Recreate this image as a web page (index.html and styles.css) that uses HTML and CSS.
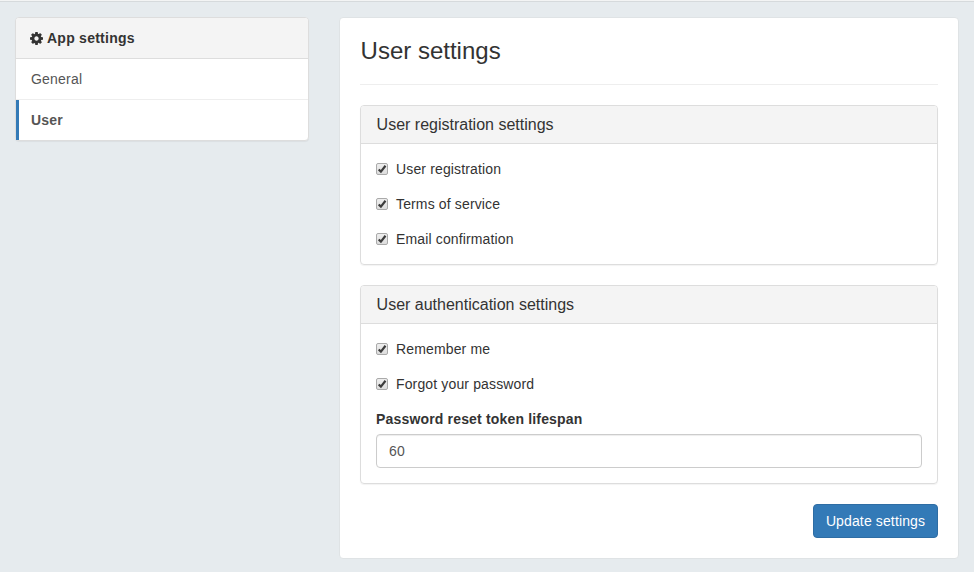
FILE: index.html
```html
<!DOCTYPE html>
<html lang="en">
<head>
<meta charset="utf-8">
<title>User settings</title>
<link rel="stylesheet" href="styles.css">
</head>
<body>
<div class="topbar"></div>
<div class="layout">
  <nav class="sidebar">
    <div class="sidebar-heading">
      <svg class="gear" viewBox="0 0 1536 1536" aria-hidden="true"><path fill-rule="evenodd" d="M1024 768q0-106-75-181t-181-75-181 75-75 181 75 181 181 75 181-75 75-181zm512-109v222q0 12-8 23t-20 13l-185 28q-19 54-39 91 35 50 107 138 10 12 10 25t-9 23q-27 37-99 108t-94 71q-12 0-26-9l-138-108q-44 23-91 38-16 136-29 186-7 28-36 28H657q-14 0-24.500-8.500T621 1506l-28-184q-49-16-90-37l-141 107q-10 9-25 9-14 0-25-11-126-114-165-168-7-10-7-23 0-12 8-23 15-21 51-66.500t54-70.500q-27-50-41-99L29 913q-13-2-21-12.500T0 877V655q0-12 8-23t19-13l186-28q14-46 39-92-40-57-107-138-10-12-10-24 0-10 9-23 26-36 98.500-107.500T337 135q13 0 26 10l138 107q44-23 91-38 16-136 29-186 7-28 36-28h222q14 0 24.500 8.500T915 30l28 184q49 16 90 37l142-107q9-9 24-9 13 0 25 10 129 119 165 170 7 8 7 22 0 12-8 23-15 21-51 66.500t-54 70.500q26 50 41 98l183 28q13 2 21 12.500t8 23.500z"/></svg>
      <span>App settings</span>
    </div>
    <a class="nav-item">General</a>
    <a class="nav-item active">User</a>
  </nav>
  <main class="content">
    <h1>User settings</h1>
    <section class="panel">
      <h2>User registration settings</h2>
      <div class="panel-body">
        <label class="check"><span class="box"><svg viewBox="0 0 12 12"><path d="M2.700 6.500L4.900 8.600L9.500 2.800"/></svg></span>User registration</label>
        <label class="check"><span class="box"><svg viewBox="0 0 12 12"><path d="M2.700 6.500L4.900 8.600L9.500 2.800"/></svg></span>Terms of service</label>
        <label class="check"><span class="box"><svg viewBox="0 0 12 12"><path d="M2.700 6.500L4.900 8.600L9.500 2.800"/></svg></span>Email confirmation</label>
      </div>
    </section>
    <section class="panel">
      <h2>User authentication settings</h2>
      <div class="panel-body">
        <label class="check"><span class="box"><svg viewBox="0 0 12 12"><path d="M2.700 6.500L4.900 8.600L9.500 2.800"/></svg></span>Remember me</label>
        <label class="check"><span class="box"><svg viewBox="0 0 12 12"><path d="M2.700 6.500L4.900 8.600L9.500 2.800"/></svg></span>Forgot your password</label>
        <label class="field-label" for="lifespan">Password reset token lifespan</label>
        <input class="field" id="lifespan" type="text" value="60">
      </div>
    </section>
    <div class="actions"><button type="button">Update settings</button></div>
  </main>
</div>
</body>
</html>
```
FILE: styles.css
```css
* { box-sizing: border-box; }
body {
  margin: 0;
  height: 572px;
  background: #e6ebee;
  color: #333;
  font: 14px/20px "Liberation Sans", Arial, sans-serif;
}
.topbar {
  height: 2px;
  background: #f3f4f4;
  border-bottom: 1px solid #d6dadc;
}
.layout {
  display: flex;
  align-items: flex-start;
  gap: 30px;
  padding: 15px 15px 0;
}
.sidebar {
  width: 294px;
  background: #fff;
  border: 1px solid #ddd;
  border-radius: 4px;
  box-shadow: 0 1px 1px rgba(0, 0, 0, .05);
}
.sidebar-heading {
  display: flex;
  align-items: center;
  gap: 4px;
  height: 41px;
  padding: 0 14px;
  background: #f4f4f4;
  border-bottom: 1px solid #ddd;
  border-radius: 3px 3px 0 0;
  font-weight: bold;
  letter-spacing: .25px;
}
.gear {
  width: 13px;
  height: 13px;
  fill: #333;
}
.nav-item {
  display: block;
  height: 41px;
  padding: 10px 15px;
  border-bottom: 1px solid #eee;
  color: #555;
  letter-spacing: .2px;
}
.nav-item.active {
  height: 40px;
  padding-left: 12px;
  border-bottom: 0;
  border-left: 3px solid #337ab7;
  font-weight: bold;
}
.content {
  width: 620px;
  height: 542px;
  padding: 20px;
  background: #fff;
  border: 1px solid #dfe3e5;
  border-radius: 4px;
}
h1 {
  height: 47px;
  margin: 0 0 20px;
  padding-left: .6px;
  border-bottom: 1px solid #eee;
  font-size: 24px;
  font-weight: normal;
  line-height: 26px;
}
.panel {
  margin-bottom: 20px;
  border: 1px solid #ddd;
  border-radius: 4px;
  box-shadow: 0 1px 1px rgba(0, 0, 0, .05);
}
h2 {
  height: 38px;
  margin: 0;
  padding: 10px 15.6px;
  background: #f4f4f4;
  border-bottom: 1px solid #ddd;
  border-radius: 3px 3px 0 0;
  font-size: 16px;
  font-weight: normal;
  line-height: 17px;
}
.panel-body { padding: 15px; }
.check {
  display: flex;
  align-items: center;
  gap: 8px;
  margin-bottom: 15px;
  letter-spacing: .14px;
}
.check:last-child { margin-bottom: 0; }
.box {
  width: 12px;
  height: 12px;
  border: 1px solid #aaa;
  border-radius: 2px;
  background: linear-gradient(#eee, #ddd);
}
.box svg {
  display: block;
  width: 12px;
  height: 12px;
  margin: -1px;
  fill: none;
  stroke: #3c3c3c;
  stroke-width: 2.2;
}
.field-label {
  display: block;
  margin-bottom: 5px;
  font-weight: bold;
  letter-spacing: .17px;
}
.field {
  display: block;
  width: 100%;
  height: 34px;
  padding: 6px 12px;
  border: 1px solid #ccc;
  border-radius: 4px;
  box-shadow: inset 0 1px 1px rgba(0, 0, 0, .075);
  color: #555;
  font: inherit;
  letter-spacing: .3px;
}
.actions {
  display: flex;
  justify-content: flex-end;
}
button {
  width: 125px;
  height: 34px;
  padding: 0;
  border: 1px solid #2e6da4;
  border-radius: 4px;
  background: #337ab7;
  color: #fff;
  font: inherit;
  letter-spacing: .13px;
}
```
